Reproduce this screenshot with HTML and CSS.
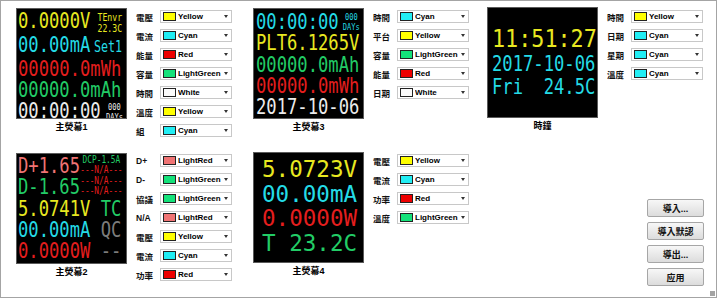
FILE: index.html
```html
<!doctype html>
<html lang="zh-Hant">
 <head>
  <meta charset="UTF-8">
  <meta name="viewport" content="width=device-width, initial-scale=1.0">
  <title>熒幕顏色設定</title>
  <link rel="stylesheet" href="styles.css">
 </head>
 <body>
  <div class="frame">
   <div class="top-row">
    <!-- 主熒幕1 -->
    <div class="panel">
     <div class="screen-col">
      <div class="screen lcd-s scr1">
       <div class="line"><span class="c-yellow">0.0000V</span><span class="mini mini-env c-yellow"><span>TEnvr</span><span>22.3C</span></span></div>
       <div class="line line-base"><span class="c-cyan">00.00mA</span><span class="set c-cyan">Set1</span></div>
       <div class="line"><span class="c-red">00000.0mWh</span></div>
       <div class="line"><span class="c-green">00000.0mAh</span></div>
       <div class="line"><span class="c-white">00:00:00</span><span class="mini mini-days c-white"><span>000</span><span>DAYs</span></span></div>
      </div>
      <div class="caption">主熒幕1</div>
     </div>
     <div class="form">
      <div class="field"><span class="field-label">電壓</span><div class="combo"><span class="swatch bg-yellow"></span><span class="combo-text">Yellow</span><span class="combo-arrow"></span></div></div>
      <div class="field"><span class="field-label">電流</span><div class="combo"><span class="swatch bg-cyan"></span><span class="combo-text">Cyan</span><span class="combo-arrow"></span></div></div>
      <div class="field"><span class="field-label">能量</span><div class="combo"><span class="swatch bg-red"></span><span class="combo-text">Red</span><span class="combo-arrow"></span></div></div>
      <div class="field"><span class="field-label">容量</span><div class="combo"><span class="swatch bg-green"></span><span class="combo-text">LightGreen</span><span class="combo-arrow"></span></div></div>
      <div class="field"><span class="field-label">時間</span><div class="combo"><span class="swatch bg-white"></span><span class="combo-text">White</span><span class="combo-arrow"></span></div></div>
      <div class="field"><span class="field-label">溫度</span><div class="combo"><span class="swatch bg-yellow"></span><span class="combo-text">Yellow</span><span class="combo-arrow"></span></div></div>
      <div class="field"><span class="field-label">組</span><div class="combo"><span class="swatch bg-cyan"></span><span class="combo-text">Cyan</span><span class="combo-arrow"></span></div></div>
     </div>
    </div>

    <!-- 主熒幕3 -->
    <div class="panel">
     <div class="screen-col">
      <div class="screen lcd-s scr3">
       <div class="line"><span class="c-cyan">00:00:00</span><span class="mini mini-days3 c-cyan"><span>000</span><span>DAYs</span></span></div>
       <div class="line"><span class="c-yellow">PLT6.1265V</span></div>
       <div class="line"><span class="c-green">00000.0mAh</span></div>
       <div class="line"><span class="c-red">00000.0mWh</span></div>
       <div class="line"><span class="c-white">2017-10-06</span></div>
      </div>
      <div class="caption">主熒幕3</div>
     </div>
     <div class="form">
      <div class="field"><span class="field-label">時間</span><div class="combo"><span class="swatch bg-cyan"></span><span class="combo-text">Cyan</span><span class="combo-arrow"></span></div></div>
      <div class="field"><span class="field-label">平台</span><div class="combo"><span class="swatch bg-yellow"></span><span class="combo-text">Yellow</span><span class="combo-arrow"></span></div></div>
      <div class="field"><span class="field-label">容量</span><div class="combo"><span class="swatch bg-green"></span><span class="combo-text">LightGreen</span><span class="combo-arrow"></span></div></div>
      <div class="field"><span class="field-label">能量</span><div class="combo"><span class="swatch bg-red"></span><span class="combo-text">Red</span><span class="combo-arrow"></span></div></div>
      <div class="field"><span class="field-label">日期</span><div class="combo"><span class="swatch bg-white"></span><span class="combo-text">White</span><span class="combo-arrow"></span></div></div>
     </div>
    </div>

    <!-- 時鐘 -->
    <div class="panel">
     <div class="screen-col clock-col">
      <div class="screen clock">
       <div class="line big"><span class="c-yellow">11:51:27</span></div>
       <div class="line"><span class="c-cyan">2017-10-06</span></div>
       <div class="line"><span class="c-cyan">Fri  24.5C</span></div>
      </div>
      <div class="caption">時鐘</div>
     </div>
     <div class="form">
      <div class="field"><span class="field-label">時間</span><div class="combo"><span class="swatch bg-yellow"></span><span class="combo-text">Yellow</span><span class="combo-arrow"></span></div></div>
      <div class="field"><span class="field-label">日期</span><div class="combo"><span class="swatch bg-cyan"></span><span class="combo-text">Cyan</span><span class="combo-arrow"></span></div></div>
      <div class="field"><span class="field-label">星期</span><div class="combo"><span class="swatch bg-cyan"></span><span class="combo-text">Cyan</span><span class="combo-arrow"></span></div></div>
      <div class="field"><span class="field-label">溫度</span><div class="combo"><span class="swatch bg-cyan"></span><span class="combo-text">Cyan</span><span class="combo-arrow"></span></div></div>
     </div>
    </div>
   </div>

   <div class="bottom-row">
    <!-- 主熒幕2 -->
    <div class="panel">
     <div class="screen-col low">
      <div class="screen lcd-s scr2">
       <div class="line"><span class="c-lightred">D+1.65</span><span class="mini mini-na"><span class="c-green">DCP-1.5A</span><span class="c-red">---N/A---</span></span></div>
       <div class="line"><span class="c-green">D-1.65</span><span class="mini mini-na c-red"><span>---N/A---</span><span>---N/A---</span></span></div>
       <div class="line"><span class="c-yellow">5.0741V</span><span class="c-green"> TC</span></div>
       <div class="line"><span class="c-cyan">00.00mA</span><span class="c-gray"> QC</span></div>
       <div class="line"><span class="c-red">0.0000W</span><span class="c-gray"> --</span></div>
      </div>
      <div class="caption">主熒幕2</div>
     </div>
     <div class="form">
      <div class="field"><span class="field-label">D+</span><div class="combo"><span class="swatch bg-lightred"></span><span class="combo-text">LightRed</span><span class="combo-arrow"></span></div></div>
      <div class="field"><span class="field-label">D-</span><div class="combo"><span class="swatch bg-green"></span><span class="combo-text">LightGreen</span><span class="combo-arrow"></span></div></div>
      <div class="field"><span class="field-label">協議</span><div class="combo"><span class="swatch bg-green"></span><span class="combo-text">LightGreen</span><span class="combo-arrow"></span></div></div>
      <div class="field"><span class="field-label">N/A</span><div class="combo"><span class="swatch bg-lightred"></span><span class="combo-text">LightRed</span><span class="combo-arrow"></span></div></div>
      <div class="field"><span class="field-label">電壓</span><div class="combo"><span class="swatch bg-yellow"></span><span class="combo-text">Yellow</span><span class="combo-arrow"></span></div></div>
      <div class="field"><span class="field-label">電流</span><div class="combo"><span class="swatch bg-cyan"></span><span class="combo-text">Cyan</span><span class="combo-arrow"></span></div></div>
      <div class="field"><span class="field-label">功率</span><div class="combo"><span class="swatch bg-red"></span><span class="combo-text">Red</span><span class="combo-arrow"></span></div></div>
     </div>
    </div>

    <!-- 主熒幕4 -->
    <div class="panel">
     <div class="screen-col">
      <div class="screen lcd-l scr4">
       <div class="line"><span class="c-yellow">5.0723V</span></div>
       <div class="line"><span class="c-cyan">00.00mA</span></div>
       <div class="line"><span class="c-red">0.0000W</span></div>
       <div class="line"><span class="c-green">T 23.2C</span></div>
      </div>
      <div class="caption">主熒幕4</div>
     </div>
     <div class="form">
      <div class="field"><span class="field-label">電壓</span><div class="combo"><span class="swatch bg-yellow"></span><span class="combo-text">Yellow</span><span class="combo-arrow"></span></div></div>
      <div class="field"><span class="field-label">電流</span><div class="combo"><span class="swatch bg-cyan"></span><span class="combo-text">Cyan</span><span class="combo-arrow"></span></div></div>
      <div class="field"><span class="field-label">功率</span><div class="combo"><span class="swatch bg-red"></span><span class="combo-text">Red</span><span class="combo-arrow"></span></div></div>
      <div class="field"><span class="field-label">溫度</span><div class="combo"><span class="swatch bg-green"></span><span class="combo-text">LightGreen</span><span class="combo-arrow"></span></div></div>
     </div>
    </div>

    <div class="actions">
     <button class="btn">導入...</button>
     <button class="btn">導入默認</button>
     <button class="btn">導出...</button>
     <button class="btn">应用</button>
    </div>
   </div>
   <span class="grip"></span>
  </div>
 </body>
</html>
```

FILE: styles.css
```css
* {
  margin: 0;
  padding: 0;
  box-sizing: border-box;
}

body {
  background: #fff;
  color: #000;
  font-family: "Liberation Sans", "Noto Sans CJK TC", sans-serif;
}

.frame {
  position: relative;
  width: 717px;
  height: 298px;
  border: 1px solid #a4a4a4;
  padding: 6px 12px 0 15px;
}

.top-row,
.bottom-row {
  display: grid;
  grid-template-columns: 237px 234px 1fr;
}

.top-row {
  height: 144px;
}

.panel {
  display: flex;
  align-items: flex-start;
}

/* ---- LCD previews ---- */

.screen-col {
  display: flex;
  flex-direction: column;
  align-items: center;
  width: 111px;
  margin-top: 1px;
}

.screen-col.low {
  margin-top: 2px;
}

.clock-col {
  margin-top: 0;
}

.screen {
  width: 111px;
  height: 111px;
  background: #000;
  border: 1px solid #5a5a5a;
  overflow: hidden;
  font-family: "DejaVu Sans Mono", monospace;
}

.line {
  display: flex;
  align-items: flex-start;
  white-space: pre;
  transform-origin: 0 0;
}

.line-base {
  align-items: baseline;
}

.lcd-s .line {
  font-size: 22px;
  line-height: 21.25px;
  transform: scaleX(0.78);
  width: 138.5px;
}

.scr1 { padding: 1px 0 0 1px; }
.scr2 { padding: 1px 0 0 1px; }
.scr3 { padding: 2px 0 0 2px; }
.scr3 .line { width: 137px; }

.lcd-l {
  padding: 4px 0 0 8px;
}

.lcd-l .line {
  font-size: 23.5px;
  line-height: 24.5px;
  transform: scaleX(0.96);
}

.clock {
  padding: 17.5px 0 0 4px;
}

.clock .line {
  font-size: 22px;
  line-height: 23px;
  transform: scaleX(0.78);
}

.clock .line.big {
  font-size: 25px;
  line-height: 26px;
  transform: scaleX(0.87);
}

.mini {
  margin-left: auto;
  display: flex;
  flex-direction: column;
  align-items: center;
}

.mini-env {
  font-size: 10.5px;
  line-height: 11px;
  padding: 1.5px 5px 0 0;
}

.mini-days {
  font-size: 9px;
  line-height: 10px;
  padding: 1.5px 4px 0 0;
}

.mini-days3 {
  font-size: 9px;
  line-height: 10px;
  padding: 0.5px 4px 0 0;
}

.mini-na {
  font-size: 10px;
  line-height: 10px;
  padding-right: 4.5px;
}

.set {
  margin-left: auto;
  font-size: 15px;
  padding-right: 5px;
}

.c-yellow { color: #e8e820; }
.c-cyan { color: #24dbe6; }
.c-red { color: #e41e1e; }
.c-green { color: #22cc66; }
.c-white { color: #ececec; }
.c-lightred { color: #f07474; }
.c-gray { color: #7c7c7c; }

.caption {
  font-size: 9px;
  font-weight: bold;
  line-height: 12px;
  margin-top: 2px;
}

/* ---- colour pickers ---- */

.form {
  margin-left: 9px;
}

.field {
  display: flex;
  align-items: center;
  height: 19px;
}

.field-label {
  width: 24px;
  font-size: 8.5px;
  font-weight: bold;
  color: #111;
}

.combo {
  width: 72px;
  height: 13px;
  display: flex;
  align-items: center;
  padding: 0 2px;
  background: #fff;
  border: 1px solid #c8c8c8;
}

.swatch {
  flex: none;
  width: 13px;
  height: 9px;
  border: 1px solid #222;
}

.bg-yellow { background: #ffff00; }
.bg-cyan { background: #22eef4; }
.bg-red { background: #ee0000; }
.bg-green { background: #14e27a; }
.bg-white { background: #fafafa; }
.bg-lightred { background: #f07474; }

.combo-text {
  flex: 1;
  margin-left: 2px;
  font-size: 8px;
  font-weight: bold;
  white-space: nowrap;
  overflow: hidden;
}

.combo-arrow {
  flex: none;
  margin-right: 1px;
  border-left: 2.5px solid transparent;
  border-right: 2.5px solid transparent;
  border-top: 3px solid #333;
}

/* ---- buttons ---- */

.actions {
  justify-self: end;
  display: flex;
  flex-direction: column;
  gap: 5px;
  padding-top: 48px;
}

.btn {
  width: 57px;
  height: 18px;
  font-family: "Liberation Sans", "Noto Sans CJK TC", sans-serif;
  font-size: 9px;
  font-weight: bold;
  color: #111;
  background: linear-gradient(#f7f7f7, #dcdcdc);
  border: 1px solid #a6a6a6;
  border-radius: 2px;
}

.grip {
  position: absolute;
  right: 1px;
  bottom: 1px;
  width: 5px;
  height: 5px;
  background: radial-gradient(circle, #a0a0a0 0.7px, transparent 0.9px) 0 0 / 2px 2px;
}
```
